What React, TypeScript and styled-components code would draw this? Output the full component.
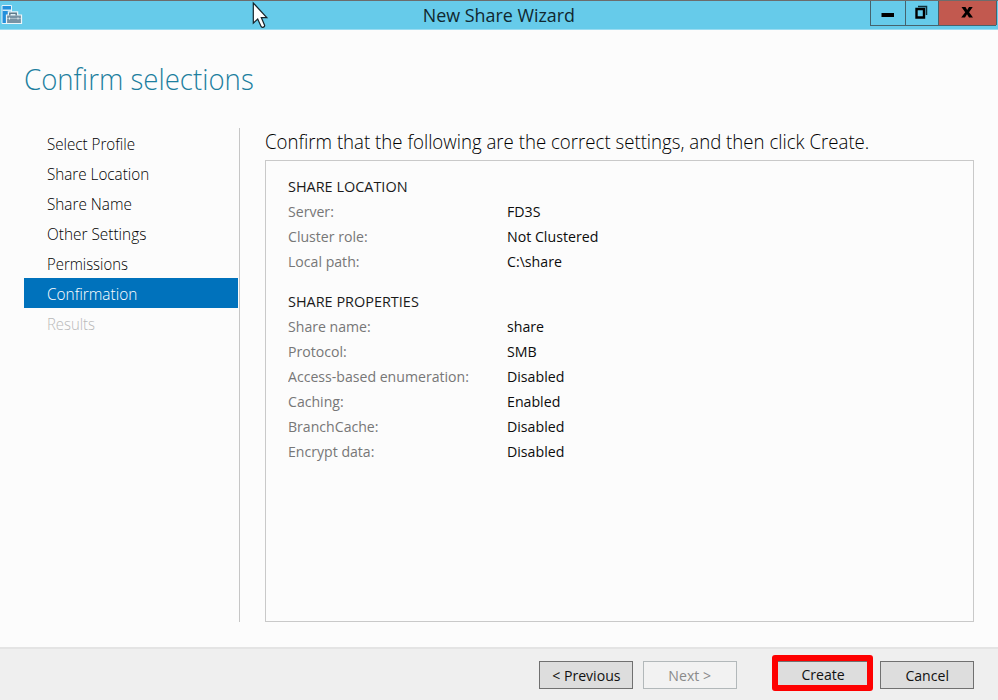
import React from "react";
import styled, { createGlobalStyle } from "styled-components";

const GlobalStyle = createGlobalStyle`
  * { box-sizing: border-box; }
  body { margin: 0; background: #fcfcfc; font-family: "Open Sans", "Noto Sans", sans-serif; }
`;

const Window = styled.div`
  width: 998px;
  height: 700px;
  display: flex;
  flex-direction: column;
  overflow: hidden;
  background: #fcfcfc;
  color: #1a1a1a;
`;

/* Slightly condensed text, scaled around one of its edges. */
const Text = styled.span<{ $scale?: number; $origin?: string }>`
  display: inline-block;
  white-space: nowrap;
  transform: scaleX(${(p) => p.$scale ?? 0.94});
  transform-origin: ${(p) => p.$origin ?? "left"} center;
`;

const TitleBar = styled.header`
  height: 30px;
  flex: none;
  display: grid;
  grid-template-columns: 128px 1fr 128px;
  background: #66cbea;
  border-top: 1px solid #6c6c6c;
  border-bottom: 1px solid #9bdcf1;
`;

const AppIcon = styled.svg`
  width: 22px;
  height: 22px;
  margin: 3px 0 0 1px;
`;

const Title = styled.h1`
  margin: 0;
  font-size: 19px;
  line-height: 28px;
  font-weight: 400;
  text-align: center;
  color: #10282f;
`;

const Controls = styled.div`
  display: grid;
  grid-template-columns: 35px 33px 58px;
  height: 25px;
  width: 126px;
  border: solid #45636d;
  border-width: 0 0 1px 1px;
`;

const Control = styled.button<{ $close?: boolean }>`
  padding: 0;
  border: 0;
  border-right: 1px solid #45636d;
  background: ${(p) => (p.$close ? "#c2594f" : "transparent")};
  svg { display: block; width: 100%; height: 24px; }
`;

const Cursor = styled.svg`
  position: absolute;
  left: 252px;
  top: 1px;
  width: 18px;
  height: 29px;
`;

const Main = styled.main`
  flex: 1;
  display: flex;
  flex-direction: column;
  padding: 28px 24px 25px;
`;

const Heading = styled.h2`
  margin: 0;
  height: 70px;
  font-size: 30px;
  line-height: 42px;
  font-weight: 300;
  color: #1c7f9f;
`;

const Columns = styled.div`
  flex: 1;
  display: grid;
  grid-template-columns: 216px 709px;
  column-gap: 25px;
`;

const Steps = styled.nav`
  border-right: 1px solid #c6c6c6;
  padding: 0 1px 0 0;
`;

const Step = styled.div<{ $state?: "active" | "disabled" }>`
  height: 30px;
  padding: 1px 0 0 22.6px;
  font-size: 16px;
  line-height: 31px;
  font-weight: 300;
  color: ${(p) => (p.$state === "active" ? "#fff" : p.$state === "disabled" ? "#b9b9b9" : "#000")};
  background: ${(p) => (p.$state === "active" ? "#0072bc" : "transparent")};
`;

const Content = styled.section`
  display: flex;
  flex-direction: column;
`;

const Instruction = styled.p`
  margin: 0;
  height: 32px;
  font-size: 20px;
  line-height: 28px;
  font-weight: 300;
  color: #000;
`;

const Summary = styled.div`
  flex: 1;
  border: 1px solid #c9c9c9;
  padding: 13px 22px;
  font-size: 15px;
  line-height: 25px;
`;

const Group = styled.dl`
  margin: 0 0 15px;
  display: grid;
  grid-template-columns: 218.500px 1fr;
`;

const GroupTitle = styled.dt`
  grid-column: 1 / -1;
`;

const Label = styled.dt`
  color: #777;
`;

const Value = styled.dd`
  margin: 0;
  color: #0c0c0c;
`;

const Footer = styled.footer`
  height: 53px;
  flex: none;
  display: flex;
  justify-content: flex-end;
  align-items: flex-start;
  padding: 12px 24px 0 0;
  border-top: 2px solid #e4e4e4;
  background: #efefef;
`;

const Button = styled.button<{ $gap?: number }>`
  width: 94px;
  height: 28px;
  margin-left: ${(p) => p.$gap ?? 0}px;
  padding: 0;
  border: 1px solid #707070;
  background: #ddd;
  font: 400 15px/26px "Open Sans", "Noto Sans", sans-serif;
  color: #111;
  &:disabled {
    border-color: #b2b8ba;
    background: #f2f2f2;
    color: #8a8a8a;
  }
`;

const Highlight = styled.div`
  width: 101px;
  height: 36px;
  margin: -6px 7px 0 35px;
  border: 6px solid #fe0000;
  border-radius: 3px;
  background: #ddd;
  display: flex;
`;

const HighlightedButton = styled(Button)`
  width: 89px;
  height: 24px;
  padding: 2px 0 0 2px;
  border-width: 1px 0 0;
  line-height: 21px;
`;

const steps: { name: string; state?: "active" | "disabled"; scale: number }[] = [
  { name: "Select Profile", scale: 0.948 },
  { name: "Share Location", scale: 0.952 },
  { name: "Share Name", scale: 0.956 },
  { name: "Other Settings", scale: 0.962 },
  { name: "Permissions", scale: 0.93 },
  { name: "Confirmation", state: "active", scale: 0.962 },
  { name: "Results", state: "disabled", scale: 0.93 },
];

const groups = [
  {
    title: "SHARE LOCATION",
    rows: [
      ["Server:", "FD3S"],
      ["Cluster role:", "Not Clustered"],
      ["Local path:", "C:\\share"],
    ],
  },
  {
    title: "SHARE PROPERTIES",
    rows: [
      ["Share name:", "share"],
      ["Protocol:", "SMB"],
      ["Access-based enumeration:", "Disabled"],
      ["Caching:", "Enabled"],
      ["BranchCache:", "Disabled"],
      ["Encrypt data:", "Disabled"],
    ],
  },
];

export default function App() {
  return (
    <Window>
      <GlobalStyle />
      <TitleBar>
        <AppIcon viewBox="0 0 22 22">
          <path d="M1 1.500h9.500v18H1z" fill="#2390dc" stroke="#e4f4fb" />
          <path d="M1.500 5.500h8.500v1.500H1.500z" fill="#cfeaf7" />
          <path d="M8.500 11V9h7v2" fill="none" stroke="#e8f3f7" strokeWidth="3.500" />
          <path d="M5.500 11h15v8.500h-15z" fill="#7893a4" stroke="#edf5f8" strokeWidth="1.200" />
          <path d="M8.800 11.500V9.300h6.400v2.200" fill="none" stroke="#5d798a" strokeWidth="1.500" />
          <path d="M6 14.500h14" stroke="#b4c6d0" strokeWidth=".8" />
          <path d="M8.500 13.500v2M17 13.500v2" stroke="#e8f3f7" />
        </AppIcon>
        <Title>
          <Text $origin="center">New Share Wizard</Text>
        </Title>
        <Controls>
          <Control aria-label="Minimize">
            <svg viewBox="0 0 34 24"><path d="M10.500 12h12.500v4H10.500z" /></svg>
          </Control>
          <Control aria-label="Restore">
            <svg viewBox="0 0 32 24">
              <path d="M10.500 8h7.500v8.500h-7.500z" fill="none" stroke="#000" strokeWidth="2.400" />
              <path d="M12 5.500h8.500V14" fill="none" stroke="#10303a" strokeWidth="1.500" />
            </svg>
          </Control>
          <Control $close aria-label="Close">
            <svg viewBox="0 0 57 24">
              <path d="M22.500 6h4l1.700 2.900L30 6h3.700l-3.600 5.200 3.900 5.300h-4l-2-3.300-2 3.300h-3.800l4-5.300z" />
            </svg>
          </Control>
        </Controls>
      </TitleBar>
      <Cursor viewBox="0 0 18 29">
        <path
          d="M1.300 2v20.200l4.400-4.100 3.500 7.600c1.200 1.500 3.800.2 3.400-1.500l-3.300-7.600h5.500z"
          fill="#fff"
          stroke="#17242a"
          strokeWidth="1.200"
        />
      </Cursor>
      <Main>
        <Heading>
          <Text $scale={0.92}>Confirm selections</Text>
        </Heading>
        <Columns>
          <Steps>
            {steps.map((s) => (
              <Step key={s.name} $state={s.state}>
                <Text $scale={s.scale}>{s.name}</Text>
              </Step>
            ))}
          </Steps>
          <Content>
            <Instruction>
              <Text $scale={0.932}>
                Confirm that the following are the correct settings, and then click Create.
              </Text>
            </Instruction>
            <Summary>
              {groups.map((g) => (
                <Group key={g.title}>
                  <GroupTitle>
                    <Text $scale={0.963}>{g.title}</Text>
                  </GroupTitle>
                  {g.rows.map(([label, value]) => (
                    <React.Fragment key={label}>
                      <Label>
                        <Text>{label}</Text>
                      </Label>
                      <Value>
                        <Text $scale={0.945}>{value}</Text>
                      </Value>
                    </React.Fragment>
                  ))}
                </Group>
              ))}
            </Summary>
          </Content>
        </Columns>
      </Main>
      <Footer>
        <Button>
          <Text $origin="center">&lt; Previous</Text>
        </Button>
        <Button $gap={10} disabled>
          <Text $origin="center">Next &gt;</Text>
        </Button>
        <Highlight>
          <HighlightedButton>
            <Text $origin="center">Create</Text>
          </HighlightedButton>
        </Highlight>
        <Button>
          <Text $origin="center">Cancel</Text>
        </Button>
      </Footer>
    </Window>
  );
}
